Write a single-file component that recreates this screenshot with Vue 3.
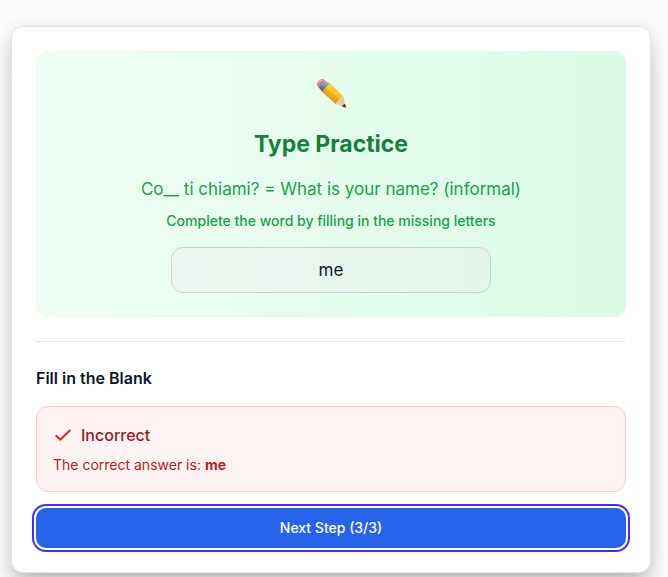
<script setup>
import { ref, computed } from 'vue'

const answer = ref('me')
const correctAnswer = 'me'
const step = ref(3)
const totalSteps = 3
const stepLabel = computed(() => `Next Step (${step.value}/${totalSteps})`)
</script>

<template>
  <main class="page">
    <section class="card">
      <div class="prompt">
        <svg class="pencil" viewBox="0 0 90 90" aria-hidden="true">
          <defs>
            <linearGradient id="wood" x1="0.7" y1="0.2" x2="0.3" y2="0.8">
              <stop offset="0" stop-color="#ffd84a" />
              <stop offset="0.45" stop-color="#f9b91c" />
              <stop offset="1" stop-color="#d98a0b" />
            </linearGradient>
            <linearGradient id="metal" x1="0.8" y1="0.1" x2="0.2" y2="0.9">
              <stop offset="0" stop-color="#b9c9d8" />
              <stop offset="0.5" stop-color="#7d93ab" />
              <stop offset="1" stop-color="#435a78" />
            </linearGradient>
          </defs>
          <path d="M3 17 Q4 9 12 5 Q20 1 25 5 L31 11 L10 30 L4 24 Q2 21 3 17Z" fill="#e8737f" />
          <path d="M6 15 Q12 6 22 6" fill="none" stroke="#f5a4a9" stroke-width="4" stroke-linecap="round" />
          <path d="M28 8 L43 17 L19 42 L8 28Z" fill="url(#metal)" />
          <path d="M33 12 L12 32 M38 16 L16 37" stroke="#5a7190" stroke-width="1.5" />
          <path d="M42 15 L82 55 Q72 58 71 67 Q62 68 60 79 L18 41Z" fill="url(#wood)" />
          <path d="M34 25 L73 62" stroke="#ffd84a" stroke-width="3" />
          <path d="M26 34 L65 70" stroke="#e8a312" stroke-width="2" />
          <path d="M82 55 L89 88 L60 79 Q62 68 71 67 Q72 58 82 55Z" fill="#ecc799" />
          <path d="M86 78 L89 88 L79 85Z" fill="#30343b" stroke="#30343b" stroke-width="2" stroke-linejoin="round" />
        </svg>
        <h1 class="title">Type Practice</h1>
        <p class="question">Co__ ti chiami? = What is your name? (informal)</p>
        <label class="hint" for="answer">Complete the word by filling in the missing letters</label>
        <input id="answer" v-model="answer" class="answer" type="text" autocomplete="off" />
      </div>

      <div class="result">
        <h2 class="heading">Fill in the Blank</h2>
        <div class="alert" role="status">
          <div class="verdict">
            <svg class="check" viewBox="0 0 20 20" aria-hidden="true">
              <path d="M3.2 10.8 L7.3 14.8 L16.8 5.5" />
            </svg>
            <span>Incorrect</span>
          </div>
          <p class="correction">The correct answer is: <strong>{{ correctAnswer }}</strong></p>
        </div>
        <button class="next" type="button">{{ stepLabel }}</button>
      </div>
    </section>
  </main>
</template>

<style>
body {
  margin: 0;
  background: #f8fafc;
}
</style>

<style scoped>
.page {
  padding: 26px 17px 4px 11px;
  overflow: hidden;
  background: #f8fafc;
  color: #0f172a;
  font-family: Inter, "Liberation Sans", sans-serif;
}

.card {
  padding: 24px;
  border: 1px solid #dde5ee;
  border-radius: 12px;
  background: #fff;
  box-shadow: 0 20px 25px -5px rgba(0, 0, 0, 0.16), 0 4px 16px rgba(0, 0, 0, 0.14);
}

.prompt {
  display: flex;
  flex-direction: column;
  align-items: center;
  padding: 24px;
  border-radius: 12px;
  background: linear-gradient(to right, #effdf4, #dbfbe6);
  text-align: center;
}

.pencil {
  width: 30px;
  height: 30px;
  margin: 3px 0 20px;
}

.title {
  margin: 0 0 15px;
  color: #15803d;
  font-size: 23px;
  font-weight: 700;
  line-height: 32px;
}

.question {
  margin: 0 0 8px;
  color: #16a34a;
  font-size: 17px;
  line-height: 28px;
}

.hint {
  margin-bottom: 16px;
  color: #16a34a;
  font-size: 14px;
  font-weight: 500;
  line-height: 20px;
}

.answer {
  box-sizing: border-box;
  width: 100%;
  max-width: 320px;
  height: 46px;
  padding: 8px 16px;
  border: 1px solid #cfd0d9;
  border-radius: 12px;
  outline: none;
  background: rgba(240, 238, 240, 0.4);
  color: #0f172a;
  font-family: inherit;
  font-size: 17px;
  line-height: 28px;
  text-align: center;
}

.result {
  display: flex;
  flex-direction: column;
  gap: 16px;
  margin-top: 24px;
  padding-top: 24px;
  border-top: 1px solid #e2e8f0;
}

.heading {
  margin: 0;
  font-size: 16px;
  font-weight: 600;
  line-height: 24px;
}

.alert {
  display: flex;
  flex-direction: column;
  gap: 8px;
  padding: 16px;
  border: 1px solid #fecaca;
  border-radius: 12px;
  background: #fef2f2;
}

.verdict {
  display: flex;
  align-items: center;
  gap: 8px;
  color: #991b1b;
  font-size: 16px;
  font-weight: 500;
  line-height: 24px;
}

.check {
  width: 20px;
  height: 20px;
  fill: none;
  stroke: #dc2626;
  stroke-width: 1.9;
  stroke-linecap: round;
  stroke-linejoin: round;
}

.correction {
  margin: 0;
  color: #b91c1c;
  font-size: 14px;
  line-height: 20px;
}

.next {
  height: 40px;
  padding: 8px 16px;
  border: 0;
  border-radius: 10px;
  outline: 2px solid #432dff;
  outline-offset: 2px;
  background: #2563eb;
  color: #fff;
  font-family: inherit;
  font-size: 14px;
  font-weight: 500;
  line-height: 20px;
}
</style>
